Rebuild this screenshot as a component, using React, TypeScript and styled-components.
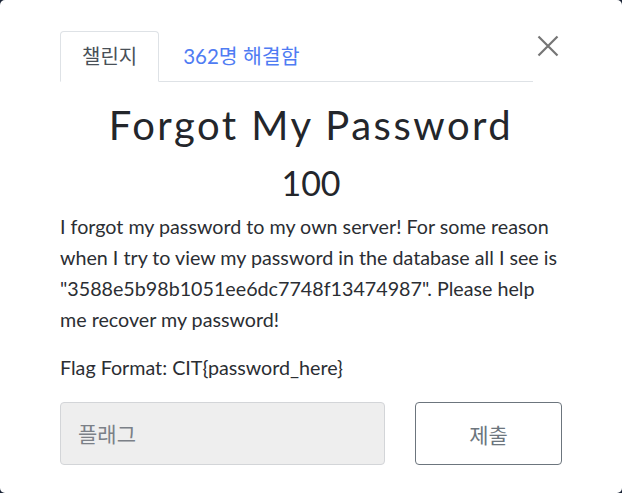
import React from "react";
import styled, { createGlobalStyle } from "styled-components";

const GlobalStyle = createGlobalStyle`
  html, body {
    margin: 0;
    padding: 0;
    background: #1b2436;
  }
  * {
    box-sizing: border-box;
  }
`;

const Modal = styled.div`
  width: 622px;
  height: 493px;
  background: #fff;
  border-radius: 5px;
  padding: 31px 60px 0;
  font-family: "Lato", "Noto Sans CJK KR", sans-serif;
  color: #212529;
`;

const Header = styled.div`
  display: flex;
  align-items: flex-start;
`;

const Tabs = styled.ul`
  flex: 1;
  display: flex;
  list-style: none;
  margin: 0;
  padding: 0;
  border-bottom: 1px solid #dee2e6;
`;

const Tab = styled.li<{ $active?: boolean }>`
  margin-bottom: -1px;
  padding: 10px 21px 11px;
  font-size: 20px;
  line-height: 28px;
  border: 1px solid ${(p) => (p.$active ? "#dee2e6" : "transparent")};
  border-bottom-color: ${(p) => (p.$active ? "#fff" : "transparent")};
  border-radius: 4px 4px 0 0;
  color: ${(p) => (p.$active ? "#495057" : "#4f7cf3")};
  background: ${(p) => (p.$active ? "#fff" : "transparent")};
  & + & {
    padding-left: 23px;
    font-size: 20.5px;
  }
`;

const Close = styled.button`
  width: 29px;
  height: 30px;
  padding: 0;
  border: none;
  background: none;
  display: flex;
  align-items: center;
  justify-content: center;
  cursor: pointer;
`;

const Title = styled.h3`
  margin: 19px 0 0;
  text-align: center;
  font-size: 40px;
  font-weight: 400;
  line-height: 48px;
  letter-spacing: 2.5px;
  color: #23262b;
`;

const Points = styled.h4`
  margin: 13px 0 0;
  text-align: center;
  font-size: 34px;
  font-weight: 400;
  line-height: 41px;
  color: #23262b;
`;

const Description = styled.div`
  margin-top: 8px;
  font-size: 19.7px;
  line-height: 31px;
  color: #2b2e33;
  p {
    margin: 0 0 17px;
  }
`;

const SubmitRow = styled.div`
  display: grid;
  grid-template-columns: 325fr 147fr;
  gap: 30px;
  margin-top: 19px;
`;

const FlagInput = styled.input`
  height: 63px;
  padding: 0 17px;
  border: 1px solid #d3d5d8;
  border-radius: 4px;
  background: #eeeeee;
  font-family: "Lato", "Noto Sans CJK KR", sans-serif;
  font-size: 21px;
  color: #495057;
  outline: none;
  &::placeholder {
    color: #7b8087;
  }
`;

const SubmitButton = styled.button`
  height: 63px;
  border: 1px solid #6c757d;
  border-radius: 4px;
  background: #fff;
  font-family: "Lato", "Noto Sans CJK KR", sans-serif;
  font-size: 21px;
  color: #6c757d;
`;

export default function App() {
  return (
    <>
      <GlobalStyle />
      <Modal>
        <Header>
          <Tabs>
            <Tab $active>챌린지</Tab>
            <Tab>362명 해결함</Tab>
          </Tabs>
          <Close aria-label="Close">
            <svg width="22" height="22" viewBox="0 0 22 22">
              <path
                d="M1.5 1.5 L20.5 20.5 M20.5 1.5 L1.5 20.5"
                stroke="#757575"
                strokeWidth="2.2"
                fill="none"
              />
            </svg>
          </Close>
        </Header>
        <Title>Forgot My Password</Title>
        <Points>100</Points>
        <Description>
          <p>
            I forgot my password to my own server! For some reason when I try to
            view my password in the database all I see is
            "3588e5b98b1051ee6dc7748f13474987". Please help me recover my
            password!
          </p>
          <p>Flag Format: CIT{"{"}password_here{"}"}</p>
        </Description>
        <SubmitRow>
          <FlagInput placeholder="플래그" />
          <SubmitButton>제출</SubmitButton>
        </SubmitRow>
      </Modal>
    </>
  );
}
